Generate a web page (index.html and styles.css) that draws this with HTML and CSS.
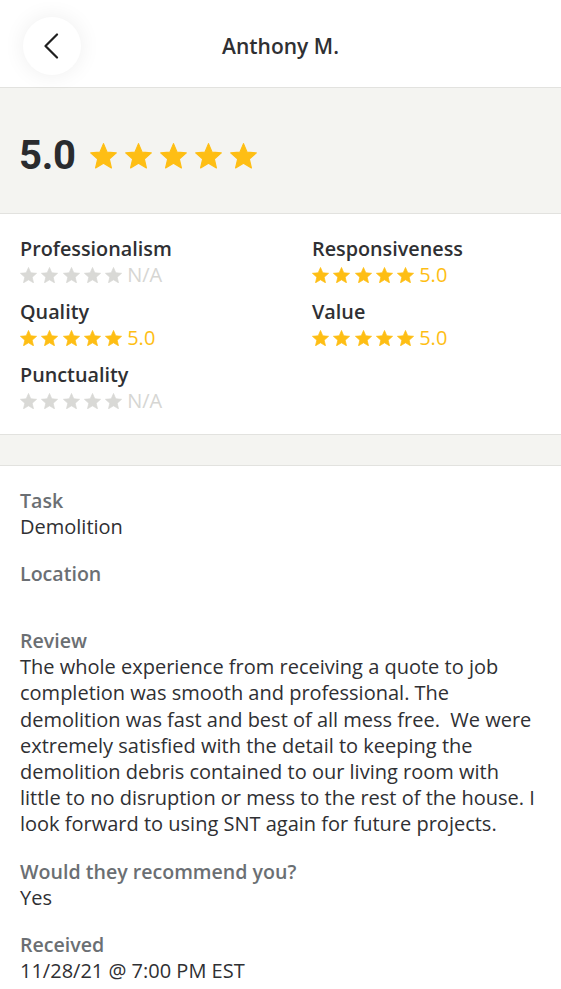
FILE: index.html
```html
<!DOCTYPE html>
<html lang="en">
<head>
<meta charset="utf-8">
<title>Anthony M.</title>
<link rel="stylesheet" href="styles.css">
</head>
<body>
<svg class="defs" aria-hidden="true">
  <symbol id="star" viewBox="1.5 1.5 21 20.3">
    <path d="M12 17.27L18.18 21l-1.64-7.03L22 9.24l-7.19-.61L12 2 9.19 8.63 2 9.24l5.46 4.73L5.82 21z" stroke="currentColor" stroke-width="0.9" stroke-linejoin="round"/>
  </symbol>
</svg>
<div class="screen">
  <header class="topbar">
    <button class="back" aria-label="Back">
      <svg class="chev" viewBox="0 0 16 26"><path d="M14 1.5 L2.5 13 L14 24.5" fill="none" stroke="#1f1f1f" stroke-width="2.2" stroke-linecap="round" stroke-linejoin="round"/></svg>
    </button>
    <h1 class="title">Anthony M.</h1>
    <span></span>
  </header>

  <section class="hero">
    <span class="score">5.0</span>
    <div class="stars stars-lg">
      <svg class="star on"><use href="#star"/></svg>
      <svg class="star on"><use href="#star"/></svg>
      <svg class="star on"><use href="#star"/></svg>
      <svg class="star on"><use href="#star"/></svg>
      <svg class="star on"><use href="#star"/></svg>
    </div>
  </section>

  <section class="ratings">
    <div class="rating">
      <div class="r-label">Professionalism</div>
      <div class="r-row">
        <div class="stars stars-sm">
          <svg class="star off"><use href="#star"/></svg>
          <svg class="star off"><use href="#star"/></svg>
          <svg class="star off"><use href="#star"/></svg>
          <svg class="star off"><use href="#star"/></svg>
          <svg class="star off"><use href="#star"/></svg>
        </div>
        <span class="r-val na">N/A</span>
      </div>
    </div>
    <div class="rating">
      <div class="r-label">Responsiveness</div>
      <div class="r-row">
        <div class="stars stars-sm">
          <svg class="star on"><use href="#star"/></svg>
          <svg class="star on"><use href="#star"/></svg>
          <svg class="star on"><use href="#star"/></svg>
          <svg class="star on"><use href="#star"/></svg>
          <svg class="star on"><use href="#star"/></svg>
        </div>
        <span class="r-val">5.0</span>
      </div>
    </div>
    <div class="rating">
      <div class="r-label">Quality</div>
      <div class="r-row">
        <div class="stars stars-sm">
          <svg class="star on"><use href="#star"/></svg>
          <svg class="star on"><use href="#star"/></svg>
          <svg class="star on"><use href="#star"/></svg>
          <svg class="star on"><use href="#star"/></svg>
          <svg class="star on"><use href="#star"/></svg>
        </div>
        <span class="r-val">5.0</span>
      </div>
    </div>
    <div class="rating">
      <div class="r-label">Value</div>
      <div class="r-row">
        <div class="stars stars-sm">
          <svg class="star on"><use href="#star"/></svg>
          <svg class="star on"><use href="#star"/></svg>
          <svg class="star on"><use href="#star"/></svg>
          <svg class="star on"><use href="#star"/></svg>
          <svg class="star on"><use href="#star"/></svg>
        </div>
        <span class="r-val">5.0</span>
      </div>
    </div>
    <div class="rating">
      <div class="r-label">Punctuality</div>
      <div class="r-row">
        <div class="stars stars-sm">
          <svg class="star off"><use href="#star"/></svg>
          <svg class="star off"><use href="#star"/></svg>
          <svg class="star off"><use href="#star"/></svg>
          <svg class="star off"><use href="#star"/></svg>
          <svg class="star off"><use href="#star"/></svg>
        </div>
        <span class="r-val na">N/A</span>
      </div>
    </div>
  </section>

  <div class="strip"></div>

  <section class="details">
    <div class="field">
      <div class="f-label">Task</div>
      <div class="f-value">Demolition</div>
    </div>
    <div class="field">
      <div class="f-label">Location</div>
      <div class="f-empty"></div>
    </div>
    <div class="field">
      <div class="f-label">Review</div>
      <p class="f-value">The whole experience from receiving a quote to job completion was smooth and professional. The demolition was fast and best of all mess free.&nbsp; We were extremely satisfied with the detail to keeping the demolition debris contained to our living room with little to no disruption or mess to the rest of the house. I look forward to using SNT again for future projects.</p>
    </div>
    <div class="field">
      <div class="f-label">Would they recommend you?</div>
      <div class="f-value">Yes</div>
    </div>
    <div class="field">
      <div class="f-label">Received</div>
      <div class="f-value">11/28/21 @ 7:00 PM EST</div>
    </div>
  </section>
</div>
</body>
</html>
```

FILE: styles.css
```css
* { box-sizing: border-box; }

html, body {
  margin: 0;
  padding: 0;
  background: #ffffff;
}

body {
  font-family: "Open Sans", "Liberation Sans", sans-serif;
  color: #2f3033;
}

.defs {
  position: absolute;
  width: 0;
  height: 0;
  overflow: hidden;
}

.screen {
  width: 561px;
}

/* header */
.topbar {
  height: 88px;
  display: grid;
  grid-template-columns: 1fr auto 1fr;
  align-items: center;
  padding: 4px 23px 0 23px;
  border-bottom: 1px solid #e2e2df;
}

.back {
  width: 58px;
  height: 58px;
  border-radius: 50%;
  border: none;
  background: #ffffff;
  box-shadow: 0 0 22px rgba(0, 0, 0, 0.07);
  display: flex;
  align-items: center;
  justify-content: center;
  padding: 0;
  justify-self: start;
}

.chev {
  width: 16px;
  height: 26px;
  margin-left: -2px;
}

.title {
  margin: 0;
  font-size: 21px;
  font-weight: 600;
  color: #2f3033;
}

/* hero */
.hero {
  height: 126px;
  background: #f4f4f1;
  border-bottom: 1px solid #e2e2df;
  display: flex;
  align-items: center;
  padding: 11px 0 0 19px;
}

.score {
  font-family: "Roboto", "Liberation Sans", sans-serif;
  font-size: 40px;
  font-weight: 700;
  color: #2a2b2e;
  letter-spacing: -0.3px;
  margin-right: 14px;
  line-height: 1;
}

.stars {
  display: flex;
}

.star {
  display: block;
  fill: currentColor;
}

.star.on { color: #febe14; }
.star.off { color: #d9d9d6; }

.stars-lg { gap: 8px; }
.stars-lg .star { width: 27px; height: 26px; }

.stars-sm { gap: 4.3px; }
.stars-sm .star { width: 17px; height: 16.5px; }

/* sub ratings */
.ratings {
  display: grid;
  grid-template-columns: 292px 1fr;
  row-gap: 11px;
  padding: 22px 0 20px 20px;
  border-bottom: 1px solid #e2e2df;
}

.r-label {
  font-size: 19.8px;
  font-weight: 600;
  line-height: 26px;
  color: #2f3033;
}

.r-row {
  display: flex;
  align-items: center;
  height: 26px;
}

.r-val {
  font-size: 20px;
  line-height: 26px;
  color: #febe14;
  margin-left: 5px;
}

.r-val.na { color: #d6d6d3; }

.strip {
  height: 31px;
  background: #f4f4f1;
  border-bottom: 1px solid #e2e2df;
}

/* details */
.details {
  padding: 22px 20px 0 20px;
}

.field {
  margin-bottom: 21px;
}

.f-label {
  font-size: 19.6px;
  font-weight: 600;
  line-height: 26px;
  color: #6b6f73;
}

.f-value {
  margin: 0;
  font-size: 20px;
  line-height: 26.2px;
  color: #2f3033;
}

.f-empty {
  height: 20px;
}
```
